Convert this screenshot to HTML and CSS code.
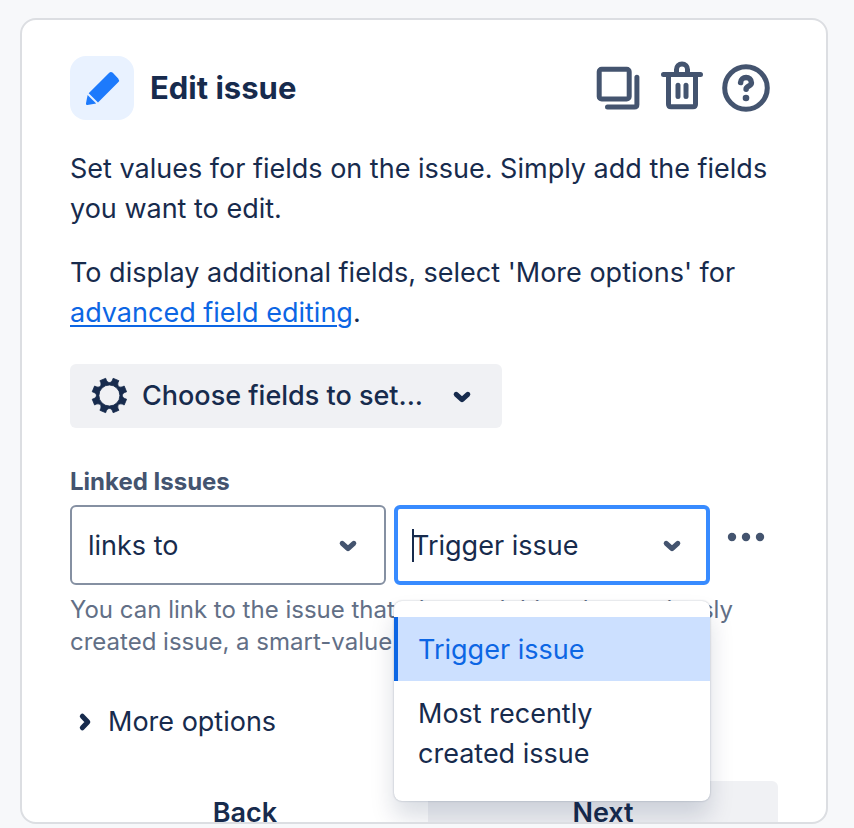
FILE: index.html
```html
<!DOCTYPE html>
<html lang="en">
<head>
<meta charset="utf-8">
<meta name="viewport" content="width=device-width, initial-scale=1">
<title>Edit issue</title>
<link rel="stylesheet" href="styles.css">
</head>
<body>
<main class="card">
  <header class="card-header">
    <span class="badge">
      <svg width="64" height="64" viewBox="0 0 64 64" fill="currentColor" aria-hidden="true">
        <path d="M18.7 37.3 39 17Q40.8 15.2 42.8 16.8L48.2 22.4Q49.9 24.5 48.2 26.2L28 46.5Z"/>
        <path d="M17.6 39 26.2 47.6 17.4 49Q15.8 49.2 16 47.4Z"/>
      </svg>
    </span>
    <h1 class="title">Edit issue</h1>
    <div class="actions">
      <button class="icon-button" type="button" aria-label="Duplicate">
        <svg class="line-icon" width="48" height="48" viewBox="0 0 48 48" aria-hidden="true">
          <rect x="5.2" y="5.2" width="30" height="29.8" rx="2.5"/>
          <path d="M42.9 13.2V40.4Q42.9 42.9 40.4 42.9H13.5"/>
        </svg>
      </button>
      <button class="icon-button" type="button" aria-label="Delete">
        <svg class="line-icon" width="48" height="48" viewBox="0 0 48 48" aria-hidden="true">
          <path d="M5.5 10.5H42.5M18.5 10V5.5a5.5 5.5 0 0 1 11 0v4.5M10.5 11V40.3Q10.5 42.8 13 42.8H35Q37.5 42.8 37.5 40.3V11M20 21.2V32.5M28 21.2V32.5"/>
        </svg>
      </button>
      <button class="icon-button" type="button" aria-label="Help">
        <svg class="line-icon" width="48" height="48" viewBox="0 0 48 48" aria-hidden="true">
          <circle cx="24" cy="24" r="21.3"/>
          <path stroke-width="5.5" d="M18.6 18.6C18.8 11.8 29.4 11.8 29.4 18.7C29.4 22.3 24.1 22.1 24.1 25.2"/>
          <circle class="dot" cx="24" cy="34" r="3.3"/>
        </svg>
      </button>
    </div>
  </header>

  <p class="text">Set values for fields on the issue. Simply add the fields you want to edit.</p>
  <p class="text">To display additional fields, select 'More options' for <a class="link" href="#">advanced field editing</a>.</p>

  <button class="choose" type="button">
    <svg width="40" height="40" viewBox="-19.4 -19.5 40 40" fill="currentColor" stroke="currentColor" stroke-width=".8" stroke-linejoin="round" fill-rule="evenodd" aria-hidden="true">
      <path d="M-3.7-17.2C-2.4-11.6 2.4-11.6 3.7-17.2L9.5-14.8C6.5-9.9 9.9-6.5 14.8-9.5L17.2-3.7C11.6-2.4 11.6 2.4 17.2 3.7L14.8 9.5C9.9 6.5 6.5 9.9 9.5 14.8L3.7 17.2C2.4 11.6-2.4 11.6-3.7 17.2L-9.5 14.8C-6.5 9.9-9.9 6.5-14.8 9.5L-17.2 3.7C-11.6 2.4-11.6-2.4-17.2-3.7L-14.8-9.5C-9.9-6.5-6.5-9.9-9.5-14.8ZM-10.5 0a10.5 10.5 0 0 0 21 0a10.5 10.5 0 0 0-21 0Z"/>
    </svg>
    <span>Choose fields to set...</span>
    <svg class="chevron choose-chevron" width="40" height="40" viewBox="0 0 40 40" aria-hidden="true"><path d="M14.2 18.3 20 23.7 25.8 18.3"/></svg>
  </button>

  <label class="label" for="link-type">Linked Issues</label>
  <div class="fields">
    <div class="field">
      <select class="control" id="link-type">
        <option>links to</option>
      </select>
      <svg class="chevron field-chevron" width="40" height="40" viewBox="0 0 40 40" aria-hidden="true"><path d="M14.2 18.3 20 23.7 25.8 18.3"/></svg>
    </div>
    <div class="field">
      <input class="control control-active" type="text" role="combobox" aria-label="Issue" aria-expanded="true" aria-controls="issue-menu" value="Trigger issue">
      <span class="caret"></span>
      <svg class="chevron field-chevron" width="40" height="40" viewBox="0 0 40 40" aria-hidden="true"><path d="M14.2 18.3 20 23.7 25.8 18.3"/></svg>
      <ul class="menu" id="issue-menu" role="listbox" aria-label="Issue">
        <li class="option option-selected" role="option" aria-selected="true">Trigger issue</li>
        <li class="option" role="option" aria-selected="false">Most recently created issue</li>
      </ul>
    </div>
    <button class="more" type="button" aria-label="More actions">
      <svg width="40" height="12" viewBox="0 0 40 12" fill="currentColor" aria-hidden="true"><circle cx="6" cy="6" r="4.2"/><circle cx="20" cy="6" r="4.2"/><circle cx="34" cy="6" r="4.2"/></svg>
    </button>
  </div>
  <p class="hint">You can link to the issue that triggered this rule, previously created issue, a smart-value</p>

  <button class="expander" type="button" aria-expanded="false">
    <svg class="chevron" width="30" height="40" viewBox="0 0 30 40" aria-hidden="true"><path d="M12.3 14.2 17.8 20 12.3 25.8"/></svg>
    <span>More options</span>
  </button>

  <footer class="footer">
    <button class="button button-subtle" type="button">Back</button>
    <button class="button" type="button">Next</button>
  </footer>
</main>
</body>
</html>
```
FILE: styles.css
```css
* {
  box-sizing: border-box;
}

body {
  display: flex;
  height: 100vh;
  margin: 0;
  padding: 18px 26px 4px 20px;
  background: #f7f8fa;
  color: #172b4d;
  font: 400 27px/40px Inter, "Liberation Sans", sans-serif;
}

h1,
p,
ul {
  margin: 0;
  padding: 0;
}

button,
select,
input {
  margin: 0;
  padding: 0;
  border: 0;
  background: none;
  color: inherit;
  font: inherit;
}

.card {
  flex: 1;
  min-width: 0;
  padding: 36px 48px 0;
  overflow: hidden;
  border: 2px solid #dcdee2;
  border-radius: 16px;
  background: #fff;
}

.card-header {
  display: flex;
  align-items: center;
  gap: 16px;
  margin-bottom: 29px;
}

.badge {
  display: flex;
  border-radius: 16px;
  background: #e9f2ff;
  color: #1d7afc;
}

.title {
  flex: 1;
  font-size: 31px;
  font-weight: 650;
}

.actions {
  display: flex;
  gap: 16px;
  margin-right: 8px;
  color: #44546f;
}

.icon-button {
  display: flex;
}

.line-icon {
  overflow: visible;
  fill: none;
  stroke: currentColor;
  stroke-width: 5;
  stroke-linecap: round;
  stroke-linejoin: round;
}

.dot {
  fill: currentColor;
  stroke: none;
}

.text {
  margin-bottom: 24px;
}

.link {
  color: #0c66e4;
  text-decoration-thickness: 2px;
  text-underline-offset: 3px;
}

.choose {
  display: flex;
  align-items: center;
  gap: 12px;
  height: 64px;
  margin: 31px 0 38px;
  padding: 0 20px;
  border-radius: 6px;
  background: #f0f1f4;
  font-weight: 500;
}

.chevron {
  fill: none;
  stroke: currentColor;
  stroke-width: 5;
  stroke-linecap: round;
  stroke-linejoin: round;
}

.choose-chevron {
  margin-left: 7px;
}

.label {
  display: block;
  margin-bottom: 7px;
  color: #44546f;
  font-size: 24px;
  font-weight: 650;
  line-height: 32px;
}

.fields {
  display: grid;
  grid-template-columns: 1fr 1fr 60px;
  gap: 8px;
}

.field {
  position: relative;
}

.control {
  display: block;
  width: 100%;
  height: 80px;
  padding: 2px 56px 0 16px;
  border: 2px solid #8590a2;
  border-radius: 6px;
  outline: 0;
  background: #fff;
  appearance: none;
}

.control-active {
  padding: 0 54px 0 14px;
  border: 4px solid #388bff;
}

.field-chevron {
  position: absolute;
  top: 20px;
  right: 18px;
  color: #44546f;
  pointer-events: none;
}

.caret {
  position: absolute;
  top: 24px;
  left: 18px;
  width: 2px;
  height: 33px;
  background: #172b4d;
}

.menu {
  position: absolute;
  z-index: 1;
  top: 96px;
  right: 0;
  left: 0;
  padding: 16px 0;
  border-radius: 8px;
  background: #fff;
  box-shadow: 0 16px 24px rgba(9, 30, 66, 0.15), 0 0 2px rgba(9, 30, 66, 0.31);
  list-style: none;
}

.option {
  padding: 13px 24px 11px;
}

.option-selected {
  background: #cce0ff;
  box-shadow: inset 4px 0 #0c66e4;
  color: #0c66e4;
}

.more {
  display: flex;
  align-items: center;
  justify-content: center;
  width: 56px;
  height: 64px;
  color: #44546f;
}

.hint {
  margin: 9px 0 44px;
  color: #626f86;
  font-size: 24px;
  line-height: 32px;
}

.expander {
  display: flex;
  align-items: center;
  gap: 8px;
}

.footer {
  display: grid;
  grid-template-columns: 1fr 1fr;
  gap: 8px;
  margin-top: 39px;
}

.button {
  height: 64px;
  border-radius: 6px;
  background: #f0f1f4;
  font-weight: 600;
}

.button-subtle {
  background: none;
}
```
